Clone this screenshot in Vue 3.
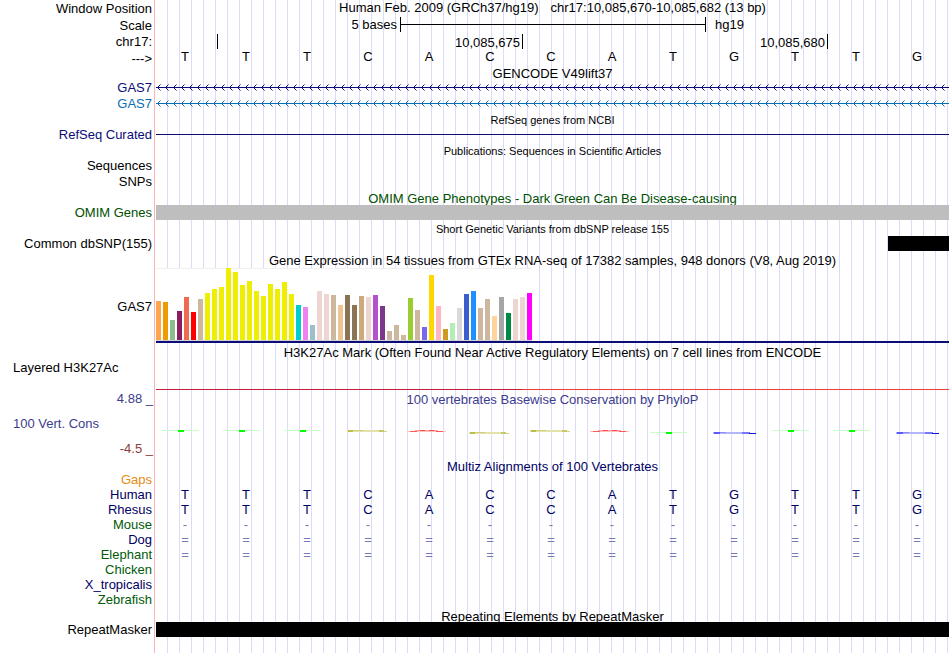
<script setup>
const bases = 'TTTCACCATGTTG'.split('')

const tissues = [
  [39, '#ffa54f'], [38, '#ee9a00'], [20, '#8fbc8f'], [29, '#8b1c62'], [43, '#ee6a50'],
  [28, '#ff0000'], [41, '#cdb79e'], [47, '#eeee00'], [51, '#eeee00'], [53, '#eeee00'],
  [72, '#eeee00'], [68, '#eeee00'], [55, '#eeee00'], [59, '#eeee00'], [49, '#eeee00'],
  [44, '#eeee00'], [56, '#eeee00'], [51, '#eeee00'], [58, '#eeee00'], [46, '#eeee00'],
  [35, '#00cdcd'], [33, '#ee82ee'], [15, '#9ac0cd'], [49, '#eed5d2'], [46, '#eed5d2'],
  [45, '#cdb79e'], [35, '#eec591'], [45, '#8b7355'], [35, '#8b7355'], [44, '#cdaa7d'],
  [43, '#eed5d2'], [45, '#b452cd'], [34, '#7a378b'], [9, '#cdb79e'], [15, '#cdb79e'],
  [5, '#cdb79e'], [42, '#9acd32'], [30, '#cdb79e'], [13, '#7a67ee'], [65, '#ffd700'],
  [34, '#ffb6c1'], [11, '#cd9b1d'], [17, '#b4eeb4'], [32, '#d9d9d9'], [46, '#3a5fcd'],
  [49, '#1e90ff'], [32, '#cdb79e'], [41, '#cdb79e'], [24, '#ffd39b'], [43, '#a6a6a6'],
  [27, '#008b45'], [41, '#eed5d2'], [43, '#eed5d2'], [47, '#ff00ff'],
]

const genes = [
  { id: 'gene-a', tone: 'navy' },
  { id: 'gene-b', tone: 'azure' },
]

const low = [5, 8]

const species = [
  { name: 'Gaps', tone: 'orange', cells: [] },
  { name: 'Human', tone: 'ink', cells: bases },
  { name: 'Rhesus', tone: 'ink', cells: bases },
  { name: 'Mouse', tone: 'forest', cells: bases.map(() => '-'), faint: true },
  { name: 'Dog', tone: 'ink', cells: bases.map(() => '='), faint: true },
  { name: 'Elephant', tone: 'forest', cells: bases.map(() => '='), faint: true },
  { name: 'Chicken', tone: 'forest', cells: [] },
  { name: 'X_tropicalis', tone: 'ink', cells: [] },
  { name: 'Zebrafish', tone: 'forest', cells: [] },
]
</script>

<template>
  <main class="browser">
    <div class="row h17">
      <div class="label">Window Position</div>
      <div class="title position"><span>Human Feb. 2009 (GRCh37/hg19)</span><span>chr17:10,085,670-10,085,682 (13 bp)</span></div>
    </div>
    <div class="row h16">
      <div class="label">Scale</div>
      <div class="track columns">
        <span class="scale-text">5 bases</span>
        <span class="bracket"></span>
        <span class="assembly">hg19</span>
      </div>
    </div>
    <div class="row h17">
      <div class="label">chr17:</div>
      <div class="track columns">
        <span class="tick t1"></span>
        <span class="tick t2">10,085,675</span>
        <span class="tick t3">10,085,680</span>
      </div>
    </div>
    <div class="row h16">
      <div class="label">---&gt;</div>
      <div class="track columns sequence">
        <span v-for="(b, i) in bases" :key="i" class="base">{{ b }}</span>
      </div>
    </div>

    <div class="row h14"><h2 class="title">GENCODE V49lift37</h2></div>
    <div class="genes">
      <div v-for="g in genes" :key="g.id" class="row h15" :class="g.tone">
        <div class="label">GAS7</div>
        <svg class="track strand" height="15" shape-rendering="crispEdges" aria-hidden="true">
          <defs>
            <pattern :id="g.id" width="8" height="15" patternUnits="userSpaceOnUse">
              <path d="M0 7h8v1h-8zM2 6h1v1h-1zM2 8h1v1h-1zM3 5h1v1h-1zM3 9h1v1h-1z" fill="currentColor" />
              <path d="M4 4h1v1h-1zM4 10h1v1h-1z" fill="currentColor" opacity=".5" />
            </pattern>
          </defs>
          <rect width="100%" height="15" :fill="`url(#${g.id})`" />
        </svg>
      </div>
    </div>

    <div class="row h16"><h2 class="title small lowered">RefSeq genes from NCBI</h2></div>
    <div class="row h15 navy">
      <div class="label">RefSeq Curated</div>
      <div class="track thin-line"></div>
    </div>

    <div class="row h16"><h2 class="title small lowered">Publications: Sequences in Scientific Articles</h2></div>
    <div class="genes">
      <div class="row h15"><div class="label">Sequences</div></div>
      <div class="row h15"><div class="label">SNPs</div></div>
    </div>

    <div class="row h16 green"><h2 class="title lowered">OMIM Gene Phenotypes - Dark Green Can Be Disease-causing</h2></div>
    <div class="row h15 green">
      <div class="label">OMIM Genes</div>
      <div class="track bar gray"></div>
    </div>

    <div class="row h16"><h2 class="title small lowered">Short Genetic Variants from dbSNP release 155</h2></div>
    <div class="row h15">
      <div class="label">Common dbSNP(155)</div>
      <div class="track columns"><span class="bar variant"></span></div>
    </div>

    <div class="row h16"><h2 class="title lowered">Gene Expression in 54 tissues from GTEx RNA-seq of 17382 samples, 948 donors (V8, Aug 2019)</h2></div>
    <div class="row expression">
      <div class="label lowered">GAS7</div>
      <div class="track gene-model">
        <div class="tissues">
          <span v-for="(t, i) in tissues" :key="i" class="tissue" :style="{ height: t[0] + 'px', background: t[1] }"></span>
        </div>
      </div>
    </div>

    <div class="row h17"><h2 class="title lowered">H3K27Ac Mark (Often Found Near Active Regulatory Elements) on 7 cell lines from ENCODE</h2></div>
    <div class="row layered">
      <div class="label left">Layered H3K27Ac</div>
      <div class="track signal columns"><span class="deep"></span><span class="bright"></span></div>
    </div>

    <div class="row h16 slate">
      <div class="label edge">4.88 _</div>
      <h2 class="title lowered">100 vertebrates Basewise Conservation by PhyloP</h2>
    </div>
    <div class="row conservation slate">
      <div class="label left">100 Vert. Cons</div>
      <div class="track columns glyphs">
        <svg v-for="(b, i) in bases" :key="i" viewBox="0 0 61 10" height="10" preserveAspectRatio="none" aria-hidden="true">
          <g :transform="low.includes(i) ? 'translate(0 2)' : ''">
            <g v-if="b === 'T'">
              <rect x="6" y="0" width="37" height="1" fill="#c8ffc8" />
              <rect x="22" y="0" width="6" height="2" fill="#00ff00" />
            </g>
            <g v-else-if="b === 'C'">
              <rect x="8" y="0" width="37" height="2" fill="#e2e2aa" />
              <rect x="9" y="0" width="5" height="2" fill="#bebe4c" />
              <rect x="14" y="0" width="10" height="1" fill="#cfcf7c" />
              <rect x="40" y="0" width="5" height="2" fill="#c8c868" />
              <rect x="45" y="1" width="3" height="1" fill="#d2d28a" />
            </g>
            <g v-else-if="b === 'A'">
              <rect x="7" y="1" width="39" height="1" fill="#ffc0c0" />
              <rect x="10" y="1" width="7" height="1" fill="#ff5a5a" />
              <rect x="15" y="0" width="23" height="1" fill="#ffa0a0" />
              <rect x="20" y="0" width="5" height="1" fill="#ff4646" />
              <rect x="29" y="0" width="5" height="1" fill="#ff4646" />
              <rect x="36" y="1" width="7" height="1" fill="#ff5a5a" />
            </g>
            <g v-else>
              <rect x="8" y="2" width="36" height="2" fill="#b4b4ff" />
              <rect x="9" y="2" width="6" height="2" fill="#5a5aff" />
              <rect x="15" y="2" width="6" height="1" fill="#8c8cff" />
              <rect x="37" y="2" width="8" height="2" fill="#7878ff" />
              <rect x="44" y="3" width="7" height="1" fill="#1414e6" />
            </g>
          </g>
        </svg>
      </div>
    </div>
    <div class="row h17 maroon"><div class="label edge">-4.5 _</div></div>

    <div class="row h15 ink"><h2 class="title lowered">Multiz Alignments of 100 Vertebrates</h2></div>
    <div v-for="s in species" :key="s.name" class="row h15">
      <div class="label" :class="s.tone">{{ s.name }}</div>
      <div class="track columns ink" :class="{ faint: s.faint }">
        <span v-for="(c, i) in s.cells" :key="i" class="base">{{ c }}</span>
      </div>
    </div>

    <div class="row h15"><h2 class="title lowered">Repeating Elements by RepeatMasker</h2></div>
    <div class="row h15">
      <div class="label">RepeatMasker</div>
      <div class="track bar black"></div>
    </div>
  </main>
</template>

<style>
body {
  margin: 0;
  background: #fff;
}
</style>

<style scoped>
.browser {
  padding: 0 1px 16px 0;
  font-family: "Liberation Sans", Arial, sans-serif;
  font-size: 13px;
  line-height: 15px;
  color: #000;
  background:
    linear-gradient(#ffb4b4, #ffb4b4) 154px 0 / 1px 100% no-repeat,
    repeating-linear-gradient(90deg, transparent 0 11px, #dcdcfa 11px 12px) 156px 0 no-repeat;
}
.row {
  display: grid;
  grid-template-columns: 152px minmax(0, 1fr);
  column-gap: 4px;
  align-items: center;
  white-space: nowrap;
}
.h14 { height: 14px; }
.h15 { height: 15px; }
.h16 { height: 16px; }
.h17 { height: 17px; }
.genes {
  display: grid;
  gap: 1px;
}
.label {
  grid-column: 1;
  text-align: right;
}
.label.left {
  text-align: left;
  padding-left: 13px;
}
.label.edge {
  margin-right: -1px;
}
.title {
  grid-column: 2;
  margin: 0;
  font-size: 13px;
  font-weight: 400;
  text-align: center;
}
.title.small { font-size: 11px; }
.lowered { padding-top: 2px; }
.position {
  display: flex;
  justify-content: center;
  gap: 12px;
  padding-bottom: 2px;
}
.track {
  grid-column: 2;
  width: 100%;
  height: 100%;
}
.columns {
  display: grid;
  grid-template-columns: repeat(13, minmax(0, 1fr));
}
.base {
  text-align: center;
  padding-right: 3px;
}
.sequence { line-height: 13px; }
.scale-text {
  grid-column: 1 / 5;
  text-align: right;
  padding-right: 3px;
}
.bracket {
  grid-column: 5 / 10;
  height: 15px;
  margin-right: -1px;
  border: solid #000;
  border-width: 0 1px;
  box-sizing: border-box;
  background: linear-gradient(#000, #000) 0 7px / 100% 1px no-repeat;
}
.assembly {
  grid-column: 10 / 12;
  padding-left: 10px;
}
.tick {
  height: 15px;
  margin: 1px -1px 0 0;
  padding-right: 2px;
  border-right: 1px solid #000;
  text-align: right;
  line-height: 17px;
}
.t1 { grid-column: 1; }
.t2 { grid-column: 2 / 7; }
.t3 { grid-column: 7 / 12; }
.strand { display: block; }
.thin-line { background: linear-gradient(#0c0c78, #0c0c78) 0 7px / 100% 1px no-repeat; }
.bar { position: relative; }
.gray { background: #bebebe; }
.black { background: #000; }
.variant {
  grid-column: 13;
  background: #000;
}
.expression { height: 76px; }
.gene-model {
  box-sizing: border-box;
  padding-top: 1px;
  border-bottom: 2px solid #0c0c78;
}
.tissues {
  display: flex;
  align-items: flex-end;
  gap: 2px;
  width: max-content;
  height: 72px;
  background: linear-gradient(#f0f0f0, #f0f0f0) 0 0 / 100% 1px no-repeat, #fff;
  border-bottom: 1px solid #d2d2d2;
}
.tissue { width: 5px; }
.layered {
  height: 30px;
  align-items: start;
}
.signal { align-items: end; }
.deep,
.bright {
  height: 1px;
  background: #c0203c;
}
.deep { grid-column: 1 / 7; }
.bright {
  grid-column: 7 / 14;
  background: #f03c3c;
}
.conservation { height: 34px; }
.glyphs { align-items: end; }
.glyphs svg {
  display: block;
  width: 100%;
}
.navy { color: #0c0c78; }
.azure { color: #0c6eb4; }
.green { color: #005000; }
.forest { color: #005a0a; }
.slate { color: #3c3c8c; }
.maroon { color: #8c3c3c; }
.ink { color: #000064; }
.orange { color: #e68c14; }
.faint { color: #7878b4; }
</style>
